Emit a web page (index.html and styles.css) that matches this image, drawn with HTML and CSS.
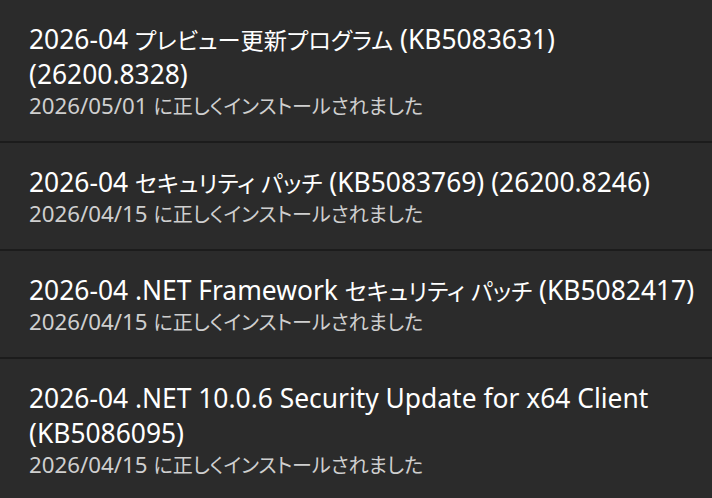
FILE: index.html
```html
<!DOCTYPE html>
<html>
<head>
    <meta charset="utf-8">
    <title>更新の履歴</title>
    <link rel="stylesheet" href="styles.css">
</head>
<body>

    <div class="history">
        <div class="item">
            <div class="item-title">2026-04 <span class="ja">プレビュー更新プログラム</span> (KB5083631) (26200.8328)</div>
            <div class="item-status">2026/05/01 <span class="ja">に正しくインストールされました</span></div>
        </div>
        <div class="item">
            <div class="item-title">2026-04 <span class="ja">セキュリティ パッチ</span> (KB5083769) (26200.8246)</div>
            <div class="item-status">2026/04/15 <span class="ja">に正しくインストールされました</span></div>
        </div>
        <div class="item">
            <div class="item-title">2026-04 .NET Framework <span class="ja">セキュリティ パッチ</span> (KB5082417)</div>
            <div class="item-status">2026/04/15 <span class="ja">に正しくインストールされました</span></div>
        </div>
        <div class="item">
            <div class="item-title">2026-04 .NET 10.0.6 Security Update for x64 Client (KB5086095)</div>
            <div class="item-status">2026/04/15 <span class="ja">に正しくインストールされました</span></div>
        </div>
    </div>

</body>
</html>
```

FILE: styles.css
```css
html, body {
    height: 100%; width: 100%;
}
body {
    margin: 0;
    background: #1c1c1c;
    font-family: "Noto Sans", "Noto Sans CJK JP", sans-serif;
    font-feature-settings: "palt";
    overflow: hidden;
}
.history {
    display: flex;
    flex-direction: column;
    gap: 2px;
}
.item {
    background: #2b2b2b;
    padding: 22px 8px 21px 29px;
}
.item-title {
    font-size: 26.4px;
    line-height: 35px;
    color: #FFF;
}
.item-status {
    font-size: 22.3px;
    line-height: 28px;
    color: #CFCFCF;
}
.item-title .ja, .item-status .ja {
    line-height: 1;
}
.item-title .ja {
    font-size: 0.88em;
}
.item-status .ja {
    font-size: 0.9em;
}
```
